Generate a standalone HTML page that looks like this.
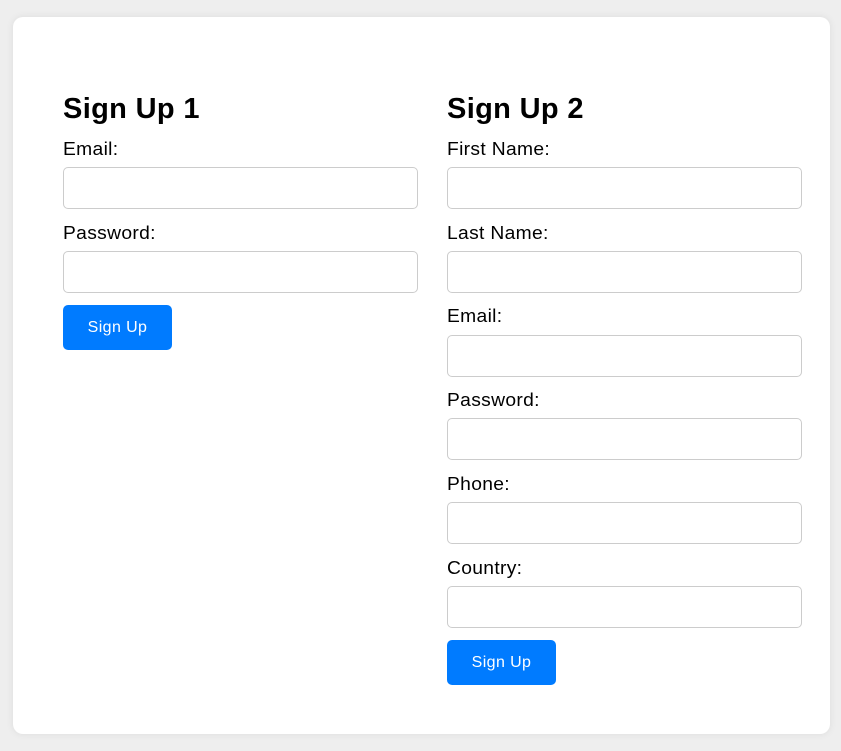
<!DOCTYPE html>
<html><head><style>
body{margin:0;width:841px;height:751px;background:#eeeeee;font-family:"Liberation Sans",Arial,sans-serif;position:relative;overflow:hidden}
.card{position:absolute;left:13px;top:17px;width:817px;height:717px;background:#fff;border-radius:10px;box-shadow:0 0 8px rgba(0,0,0,.08)}
.h{position:absolute;font-size:29px;font-weight:bold;line-height:34px;margin:0;color:#000;letter-spacing:0.35px}
.l{position:absolute;font-size:18px;line-height:21px;color:#000;letter-spacing:0.3px;transform:scaleX(1.07);transform-origin:0 0;white-space:nowrap}
.i{position:absolute;width:353px;height:40px;border:1px solid #ccc;border-radius:5px;background:#fff}
.b{position:absolute;width:109px;height:45px;background:#007bff;border-radius:5px;color:#fff;font-size:16px;line-height:45px;text-align:center;letter-spacing:0.4px}
</style></head><body>
<div class="card"></div>
<div class="h" style="left:63px;top:92px">Sign Up 1</div>
<div class="l" style="left:63px;top:139px">Email:</div>
<div class="i" style="left:63px;top:167px"></div>
<div class="l" style="left:63px;top:223px">Password:</div>
<div class="i" style="left:63px;top:251px"></div>
<div class="b" style="left:63px;top:305px">Sign Up</div>

<div class="h" style="left:447px;top:92px">Sign Up 2</div>
<div class="l" style="left:447px;top:139px">First Name:</div>
<div class="i" style="left:447px;top:167px"></div>
<div class="l" style="left:447px;top:223px">Last Name:</div>
<div class="i" style="left:447px;top:251px"></div>
<div class="l" style="left:447px;top:306px">Email:</div>
<div class="i" style="left:447px;top:335px"></div>
<div class="l" style="left:447px;top:390px">Password:</div>
<div class="i" style="left:447px;top:418px"></div>
<div class="l" style="left:447px;top:474px">Phone:</div>
<div class="i" style="left:447px;top:502px"></div>
<div class="l" style="left:447px;top:558px">Country:</div>
<div class="i" style="left:447px;top:586px"></div>
<div class="b" style="left:447px;top:640px">Sign Up</div>
</body></html>
